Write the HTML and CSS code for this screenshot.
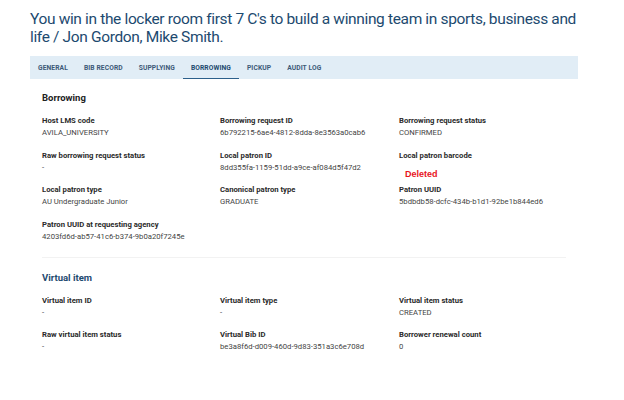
FILE: index.html
```html
<!DOCTYPE html>
<html lang="en">
<head>
<meta charset="utf-8">
<title>Borrowing</title>
<link rel="stylesheet" href="styles.css">
</head>
<body>
<div class="page">
  <h1 class="title">You win in the locker room first 7 C's to build a winning team in sports, business and life / Jon Gordon, Mike Smith.</h1>
  <nav class="tabs">
    <span class="tab">GENERAL</span>
    <span class="tab">BIB RECORD</span>
    <span class="tab">SUPPLYING</span>
    <span class="tab active">BORROWING</span>
    <span class="tab">PICKUP</span>
    <span class="tab">AUDIT LOG</span>
  </nav>
  <section class="panel">
    <h2 class="section-title">Borrowing</h2>
    <div class="grid">
      <div class="field"><div class="label">Host LMS code</div><div class="value">AVILA_UNIVERSITY</div></div>
      <div class="field"><div class="label">Borrowing request ID</div><div class="value">6b792215-6ae4-4812-8dda-8e3563a0cab6</div></div>
      <div class="field"><div class="label">Borrowing request status</div><div class="value">CONFIRMED</div></div>
      <div class="field"><div class="label">Raw borrowing request status</div><div class="value">-</div></div>
      <div class="field"><div class="label">Local patron ID</div><div class="value">8dd355fa-1159-51dd-a9ce-af084d5f47d2</div></div>
      <div class="field"><div class="label">Local patron barcode</div><div class="value deleted">Deleted</div></div>
      <div class="field"><div class="label">Local patron type</div><div class="value">AU Undergraduate Junior</div></div>
      <div class="field"><div class="label">Canonical patron type</div><div class="value">GRADUATE</div></div>
      <div class="field"><div class="label">Patron UUID</div><div class="value">5bdbdb58-dcfc-434b-b1d1-92be1b844ed6</div></div>
      <div class="field"><div class="label">Patron UUID at requesting agency</div><div class="value">4203fd6d-ab57-41c6-b374-9b0a20f7245e</div></div>
    </div>
    <hr class="divider">
    <h2 class="section-title blue">Virtual item</h2>
    <div class="grid">
      <div class="field"><div class="label">Virtual item ID</div><div class="value">-</div></div>
      <div class="field"><div class="label">Virtual item type</div><div class="value">-</div></div>
      <div class="field"><div class="label">Virtual item status</div><div class="value">CREATED</div></div>
      <div class="field"><div class="label">Raw virtual item status</div><div class="value">-</div></div>
      <div class="field"><div class="label">Virtual Bib ID</div><div class="value">be3a8f6d-d009-460d-9d83-351a3c6e708d</div></div>
      <div class="field"><div class="label">Borrower renewal count</div><div class="value">0</div></div>
    </div>
  </section>
</div>
</body>
</html>
```

FILE: styles.css
```css
* { box-sizing: border-box; }
body {
  margin: 0;
  background: #ffffff;
  font-family: Roboto, "Liberation Sans", sans-serif;
  color: #2a2a2a;
}
.page {
  width: 578px;
  padding-left: 30px;
  padding-top: 10px;
}
.title {
  margin: 0;
  font-size: 15.5px;
  line-height: 18px;
  letter-spacing: -0.35px;
  font-weight: 400;
  color: #1d4a6f;
}
.tabs {
  margin-top: 10px;
  height: 23px;
  background: #e1edf6;
  display: flex;
  align-items: stretch;
}
.tab {
  padding: 0 8px;
  display: flex;
  align-items: center;
  font-size: 6.7px;
  font-weight: 700;
  color: #3d5a78;
  letter-spacing: 0.1px;
  border-bottom: 1.5px solid transparent;
  padding-top: 1px;
}
.tab.active {
  color: #1d4a6f;
  border-bottom-color: #2c5f8a;
}
.panel {
  padding: 13px 12px 0 12px;
}
.section-title {
  margin: 0;
  font-size: 9.5px;
  line-height: 12px;
  font-weight: 700;
  color: #222;
}
.section-title.blue {
  color: #1d4a6f;
}
.grid {
  margin-top: 11px;
  display: grid;
  grid-template-columns: 178px 179px 178px;
  row-gap: 10.5px;
}
.field {
  display: flex;
  flex-direction: column;
}
.label {
  font-size: 7.7px;
  line-height: 12px;
  font-weight: 700;
  color: #2a2a2a;
}
.value {
  font-size: 7.7px;
  line-height: 12px;
  color: #444;
}
.value.deleted {
  font-family: "Liberation Sans", Arial, sans-serif;
  font-weight: 700;
  font-size: 9px;
  color: #e8141c;
  padding-left: 6px;
  padding-top: 6px;
  line-height: 12px;
  height: 12px;
}
.divider {
  margin: 14px 0 0 0;
  width: 524px;
  border: 0;
  border-top: 1.5px solid #f2f2f2;
}
.divider + .section-title {
  margin-top: 14px;
}
```
